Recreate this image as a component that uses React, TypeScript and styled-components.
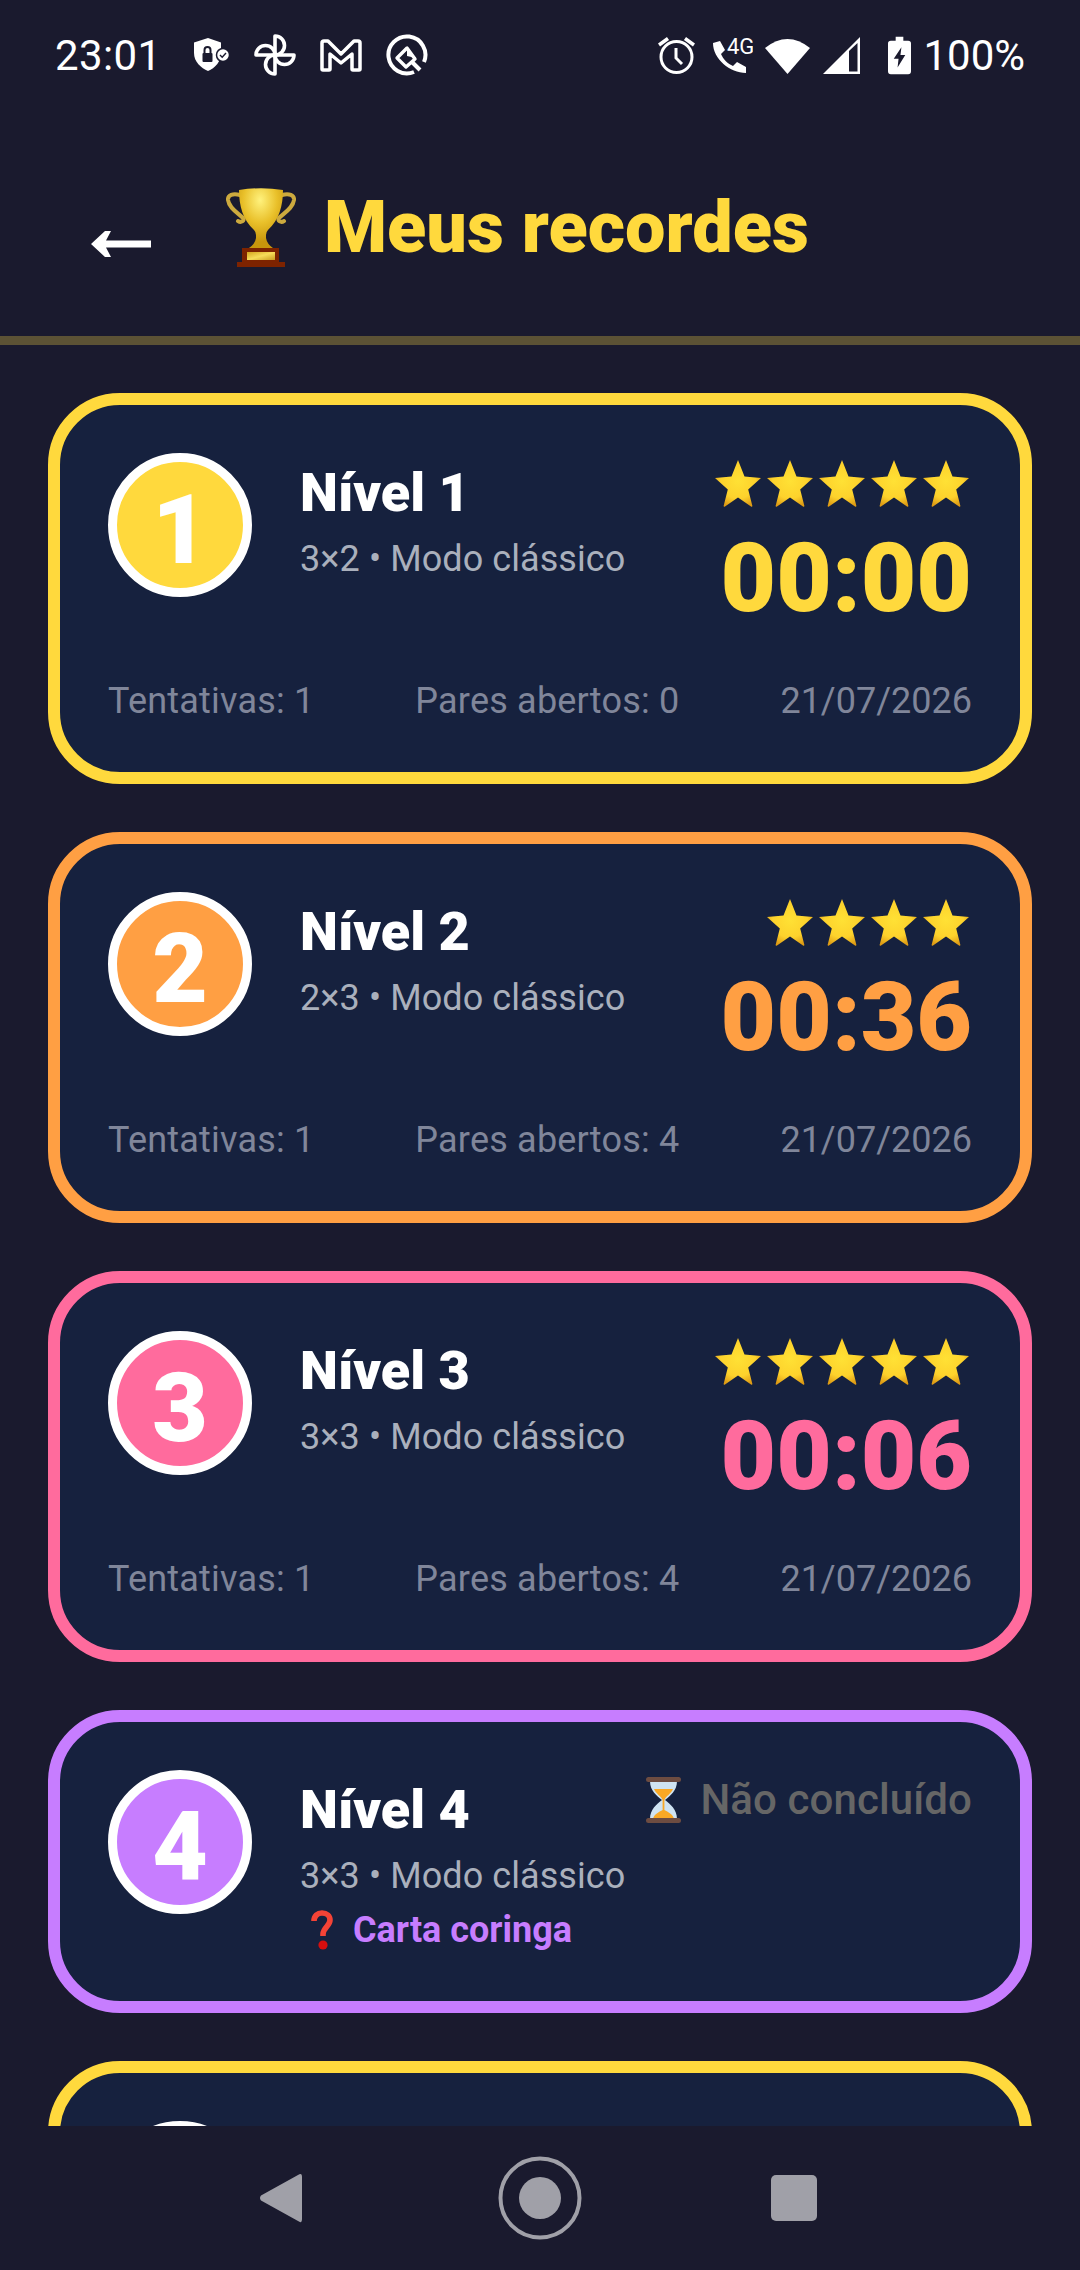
import React from "react";
import styled, { createGlobalStyle } from "styled-components";

const Global = createGlobalStyle`
  html, body { margin: 0; padding: 0; background: #1a1a2e; }
  body { font-family: Roboto, "Liberation Sans", sans-serif; }
`;

const Screen = styled.div`
  width: 1080px;
  height: 2270px;
  background: #1a1a2e;
  display: flex;
  flex-direction: column;
  overflow: hidden;
`;

const StatusBar = styled.div`
  height: 110px;
  flex: none;
  padding: 0 55px;
  display: flex;
  align-items: center;
  justify-content: space-between;
  color: #fff;
  box-sizing: border-box;
`;

const StatusGroup = styled.div`
  display: flex;
  align-items: center;
`;

const Clock = styled.span`
  font-size: 42px;
  letter-spacing: 0.4px;
  margin-right: 32px;
`;

const Battery = styled.span`
  font-size: 42px;
  margin-left: 12px;
`;

const Header = styled.header`
  flex: none;
  height: 226px;
  display: flex;
  align-items: center;
  padding: 0 0 0 91px;
  box-sizing: border-box;
`;

const BackArrow = styled.svg`
  width: 60px;
  height: 26px;
  margin-top: 42px;
  margin-right: 75px;
`;

const TrophySlot = styled.div`
  margin-top: 9px;
`;

const Title = styled.h1`
  margin: 10px 0 0 28px;
  font-size: 72px;
  font-weight: 900;
  color: #ffd93d;
  line-height: 1;
`;

const Divider = styled.div`
  flex: none;
  height: 9px;
  background: #5c5235;
`;

const List = styled.main`
  flex: none;
  height: 1781px;
  box-sizing: border-box;
  padding: 48px 48px 0;
  display: flex;
  flex-direction: column;
  gap: 48px;
  overflow: hidden;
`;

const Card = styled.section<{ $color: string }>`
  flex: none;
  box-sizing: border-box;
  border: 12px solid ${(p) => p.$color};
  border-radius: 72px;
  background: #16213e;
  padding: 48px 48px 50px;
  display: flex;
  flex-direction: column;
`;

const TopRow = styled.div`
  display: flex;
  align-items: flex-start;
`;

const Badge = styled.div<{ $color: string }>`
  flex: none;
  box-sizing: border-box;
  width: 144px;
  height: 144px;
  padding-top: 10px;
  border-radius: 50%;
  border: 9px solid #fff;
  background: ${(p) => p.$color};
  color: #fff;
  font-size: 96px;
  font-weight: 900;
  display: flex;
  align-items: center;
  justify-content: center;
  line-height: 1;
`;

const Info = styled.div`
  flex: 1;
  margin-left: 48px;
  min-width: 0;
`;

const LevelName = styled.div`
  font-size: 54px;
  font-weight: 900;
  color: #fff;
  line-height: 63px;
  margin-top: 8px;
`;

const Meta = styled.div`
  font-size: 36px;
  color: #aab0bc;
  letter-spacing: 0.08px;
  line-height: 42px;
  margin-top: 14px;
  white-space: nowrap;
`;

const Wild = styled.div`
  font-size: 36px;
  font-weight: 700;
  color: #c77dff;
  line-height: 42px;
  margin-top: 12px;
  display: flex;
  align-items: center;
`;

const Result = styled.div`
  flex: none;
  display: flex;
  flex-direction: column;
  align-items: flex-end;
`;

const Stars = styled.div`
  display: flex;
  gap: 6px;
  margin-top: 7px;
  margin-right: 3px;
`;

const Time = styled.div<{ $color: string }>`
  font-size: 96px;
  font-weight: 900;
  color: ${(p) => p.$color};
  line-height: 112px;
  margin-top: 15px;
`;

const Pending = styled.div`
  display: flex;
  align-items: center;
  font-size: 42px;
  font-weight: 500;
  color: #666;
  letter-spacing: 0.1px;
  line-height: 50px;
  margin-top: 5px;
`;

const Footer = styled.div`
  display: flex;
  justify-content: space-between;
  font-size: 36px;
  color: #80869a;
  letter-spacing: 0.2px;
  line-height: 42px;
  margin-top: 46px;
`;

const FooterDate = styled.span`
  letter-spacing: 0;
`;

const Nav = styled.nav`
  flex: none;
  height: 144px;
  background: #1a1a2e;
  display: flex;
  align-items: center;
  justify-content: center;
  gap: 172px;
`;

const NavItem = styled.svg`
  width: 84px;
  height: 84px;
`;

const Icon = styled.svg<{ $gap?: number }>`
  display: block;
  flex: none;
  margin-right: ${(p) => p.$gap ?? 0}px;
`;

const StarIcon = () => (
  <Icon width="46" height="47" viewBox="0 0 46 47">
    <defs>
      <radialGradient id="starG" cx="50%" cy="45%" r="58%">
        <stop offset="0" stopColor="#ffe135" />
        <stop offset="0.65" stopColor="#fdd22c" />
        <stop offset="1" stopColor="#dd9a14" />
      </radialGradient>
    </defs>
    <path
      d="M23 0 L29.5 16.6 L46 18 L33.2 29.4 L37.4 46 Q37.2 47 36 46.4 L23 37.4 L10 46.4 Q8.8 47 8.6 46 L12.8 29.4 L0 18 L16.5 16.6 Z"
      fill="url(#starG)"
    />
  </Icon>
);

const Trophy = () => (
  <Icon width="70" height="79" viewBox="0 0 70 79">
    <defs>
      <radialGradient id="cupG" cx="48%" cy="20%" r="70%">
        <stop offset="0" stopColor="#fff27d" />
        <stop offset="0.55" stopColor="#e9c02a" />
        <stop offset="1" stopColor="#c8960c" />
      </radialGradient>
      <linearGradient id="plateG" x1="0" y1="0" x2="1" y2="1">
        <stop offset="0" stopColor="#d4a51e" />
        <stop offset="0.5" stopColor="#f6dc5a" />
        <stop offset="1" stopColor="#c99c1f" />
      </linearGradient>
    </defs>
    <path d="M14 7 C7 5 1.5 7 2 12 C3 20 12 25 17 30 C19 33 15 35 12 33" fill="none" stroke="#cdaa3e" strokeWidth="4" strokeLinecap="round" />
    <path d="M56 7 C63 5 68.5 7 68 12 C67 20 58 25 53 30 C51 33 55 35 58 33" fill="none" stroke="#cdaa3e" strokeWidth="4" strokeLinecap="round" />
    <path d="M13 2 Q35 -1.5 57 2 C57 18 53 32 42 42 Q40 44 40 47 V50 Q41 56 47 60 H23 Q29 56 30 50 V47 Q30 44 28 42 C17 32 13 18 13 2 Z" fill="url(#cupG)" />
    <rect x="16" y="60" width="37" height="14" fill="#7d2300" />
    <rect x="21" y="64" width="28" height="8" fill="url(#plateG)" />
    <rect x="11" y="74" width="48" height="5" fill="#7d2300" />
  </Icon>
);

const Hourglass = () => (
  <Icon width="35" height="46" viewBox="0 0 35 46" $gap={19}>
    <path d="M4 4 H31 C31 14 24 19 19 23 C24 27 31 32 31 42 H4 C4 32 11 27 16 23 C11 19 4 14 4 4 Z" fill="#cfe3f2" />
    <path d="M8 12 H27 C25 17 20 19 18.4 23 V33 C22 35 27 37 28 42 H7 C8 37 13 35 16.6 33 V23 C15 19 10 17 8 12 Z" fill="#f9a825" />
    <rect x="0" y="0" width="35" height="5" rx="2.5" fill="#6d4c41" />
    <rect x="0" y="41" width="35" height="5" rx="2.5" fill="#6d4c41" />
  </Icon>
);

const Question = () => (
  <Icon width="22" height="40" viewBox="0 0 22 40" $gap={20} style={{ marginLeft: 11 }}>
    <path d="M3 11 C3 6 6.5 3 11 3 C16 3 19 6 19 10 C19 16 12.5 17 12 24 V26" fill="none" stroke="#f44336" strokeWidth="5.6" />
    <circle cx="12" cy="35" r="4.6" fill="#d50e0e" />
  </Icon>
);

const levels = [
  { n: 1, color: "#ffd93d", size: "3×2", stars: 5, time: "00:00", tries: 1, pairs: 0 },
  { n: 2, color: "#ff9f43", size: "2×3", stars: 4, time: "00:36", tries: 1, pairs: 4 },
  { n: 3, color: "#ff6b9d", size: "3×3", stars: 5, time: "00:06", tries: 1, pairs: 4 },
];

export default function App() {
  return (
    <Screen>
      <Global />
      <StatusBar>
        <StatusGroup>
          <Clock>23:01</Clock>
          <Icon width="36" height="34" viewBox="0 0 36 34" $gap={24}>
            <path d="M14 0 L27 4.5 V15 C27 24 21 30 14 33 C7 30 0 24 0 15 V4.5 Z" fill="#fff" />
            <rect x="8.5" y="15" width="10" height="9" rx="1" fill="#1a1a2e" />
            <path d="M10.5 15 V12 a3 3 0 0 1 6 0 V15" fill="none" stroke="#1a1a2e" strokeWidth="2" />
            <circle cx="29" cy="17" r="6.5" fill="#fff" stroke="#1a1a2e" strokeWidth="1.5" />
            <path d="M26 17 L28.2 19.2 L32 15" fill="none" stroke="#1a1a2e" strokeWidth="1.4" />
          </Icon>
          <Icon width="42" height="42" viewBox="0 0 42 42" $gap={24}>
            <g fill="none" stroke="#fff" strokeWidth="3.6" strokeLinejoin="round">
              <path d="M21 21 H40 A9.5 9.5 0 0 1 21 21 Z" />
              <path d="M21 21 V40 A9.5 9.5 0 0 1 21 21 Z" />
              <path d="M21 21 H2 A9.5 9.5 0 0 1 21 21 Z" />
              <path d="M21 21 V2 A9.5 9.5 0 0 1 21 21 Z" />
            </g>
          </Icon>
          <Icon width="42" height="33" viewBox="0 0 42 33" $gap={24}>
            <path d="M2 30 V4 Q2 2 4 2 H8 L21 15 L34 2 H38 Q40 2 40 4 V30 Q40 31 39 31 H33 Q32 31 32 30 V15 L21 24 L10 15 V30 Q10 31 9 31 H3 Q2 31 2 30 Z" fill="none" stroke="#fff" strokeWidth="3.5" strokeLinejoin="round" />
          </Icon>
          <Icon width="42" height="42" viewBox="0 0 42 42">
            <path d="M28 38 A18.5 18.5 0 1 1 38 28" fill="none" stroke="#fff" strokeWidth="4" />
            <path d="M21 14 L11 24 L20 33 L29 25 Z" fill="none" stroke="#fff" strokeWidth="3.4" strokeLinejoin="round" />
            <path d="M21 14 L30 24 L21 22 Z" fill="#fff" />
            <path d="M26 28 L34 36" stroke="#fff" strokeWidth="4" />
          </Icon>
        </StatusGroup>
        <StatusGroup>
          <Icon width="37" height="38" viewBox="0 0 37 38" $gap={17}>
            <circle cx="18.5" cy="21" r="15.5" fill="none" stroke="#fff" strokeWidth="3" />
            <path d="M18 12 V22 L24 28" fill="none" stroke="#fff" strokeWidth="3" />
            <path d="M1 9 L10 2.5 M36 9 L27 2.5" stroke="#fff" strokeWidth="3.5" />
          </Icon>
          <Icon width="41" height="40" viewBox="0 0 41 40" $gap={12}>
            <path d="M1 8 L8 6 L13 15 L9 19 C11 24 16 29 21 31 L25 27 L34 32 V38 C18 38 1 24 1 8 Z" fill="#fff" />
            <text x="15" y="19" fill="#fff" fontFamily="Roboto" fontSize="22">4G</text>
          </Icon>
          <Icon width="45" height="37" viewBox="0 0 45 37" $gap={13}>
            <path d="M0 11 Q22.5 -7 45 11 L22.5 37 Z" fill="#fff" />
          </Icon>
          <Icon width="37" height="37" viewBox="0 0 37 37" $gap={28}>
            <path d="M37 0 V37 H0 Z" fill="#fff" />
            <path d="M26 14 V34.5 H34.5 V6 Z" fill="#1a1a2e" />
          </Icon>
          <Icon width="23" height="39" viewBox="0 0 24 39">
            <path d="M8 0 H16 V4 H21 Q24 4 24 7 V36 Q24 39 21 39 H3 Q0 39 0 36 V7 Q0 4 3 4 H8 Z" fill="#fff" />
            <path d="M14 11 L6 23 H11 L10 32 L18 19 H13 Z" fill="#1a1a2e" />
          </Icon>
          <Battery>100%</Battery>
        </StatusGroup>
      </StatusBar>

      <Header>
        <BackArrow viewBox="0 0 60 26">
          <path d="M14 0 H20 L15 9.5 H60 V16.5 H15 L20 26 H14 L0 13 Z" fill="#fff" />
        </BackArrow>
        <TrophySlot>
          <Trophy />
        </TrophySlot>
        <Title>Meus recordes</Title>
      </Header>
      <Divider />

      <List>
        {levels.map((l) => (
          <Card key={l.n} $color={l.color}>
            <TopRow>
              <Badge $color={l.color}>{l.n}</Badge>
              <Info>
                <LevelName>Nível {l.n}</LevelName>
                <Meta>{l.size} • Modo clássico</Meta>
              </Info>
              <Result>
                <Stars>
                  {Array.from({ length: l.stars }).map((_, i) => (
                    <StarIcon key={i} />
                  ))}
                </Stars>
                <Time $color={l.color}>{l.time}</Time>
              </Result>
            </TopRow>
            <Footer>
              <span>Tentativas: {l.tries}</span>
              <span>Pares abertos: {l.pairs}</span>
              <FooterDate>21/07/2026</FooterDate>
            </Footer>
          </Card>
        ))}
        <Card $color="#c77dff">
          <TopRow>
            <Badge $color="#c77dff">4</Badge>
            <Info>
              <LevelName>Nível 4</LevelName>
              <Meta>3×3 • Modo clássico</Meta>
              <Wild>
                <Question />
                Carta coringa
              </Wild>
            </Info>
            <Result>
              <Pending>
                <Hourglass />
                Não concluído
              </Pending>
            </Result>
          </TopRow>
        </Card>
        <Card $color="#ffd93d">
          <TopRow>
            <Badge $color="#ffd93d" />
          </TopRow>
        </Card>
      </List>

      <Nav>
        <NavItem viewBox="0 0 84 84">
          <path d="M56 19 Q60 16 60 21 V63 Q60 68 56 65 L19 44.5 Q17 42 19 39.5 Z" fill="#a0a0a8" />
        </NavItem>
        <NavItem viewBox="0 0 84 84">
          <circle cx="42" cy="42" r="39.5" fill="none" stroke="#a0a0a8" strokeWidth="4" />
          <circle cx="42" cy="42" r="21" fill="#a0a0a8" />
        </NavItem>
        <NavItem viewBox="0 0 84 84">
          <rect x="17" y="19" width="46" height="46" rx="5" fill="#a0a0a8" />
        </NavItem>
      </Nav>
    </Screen>
  );
}
